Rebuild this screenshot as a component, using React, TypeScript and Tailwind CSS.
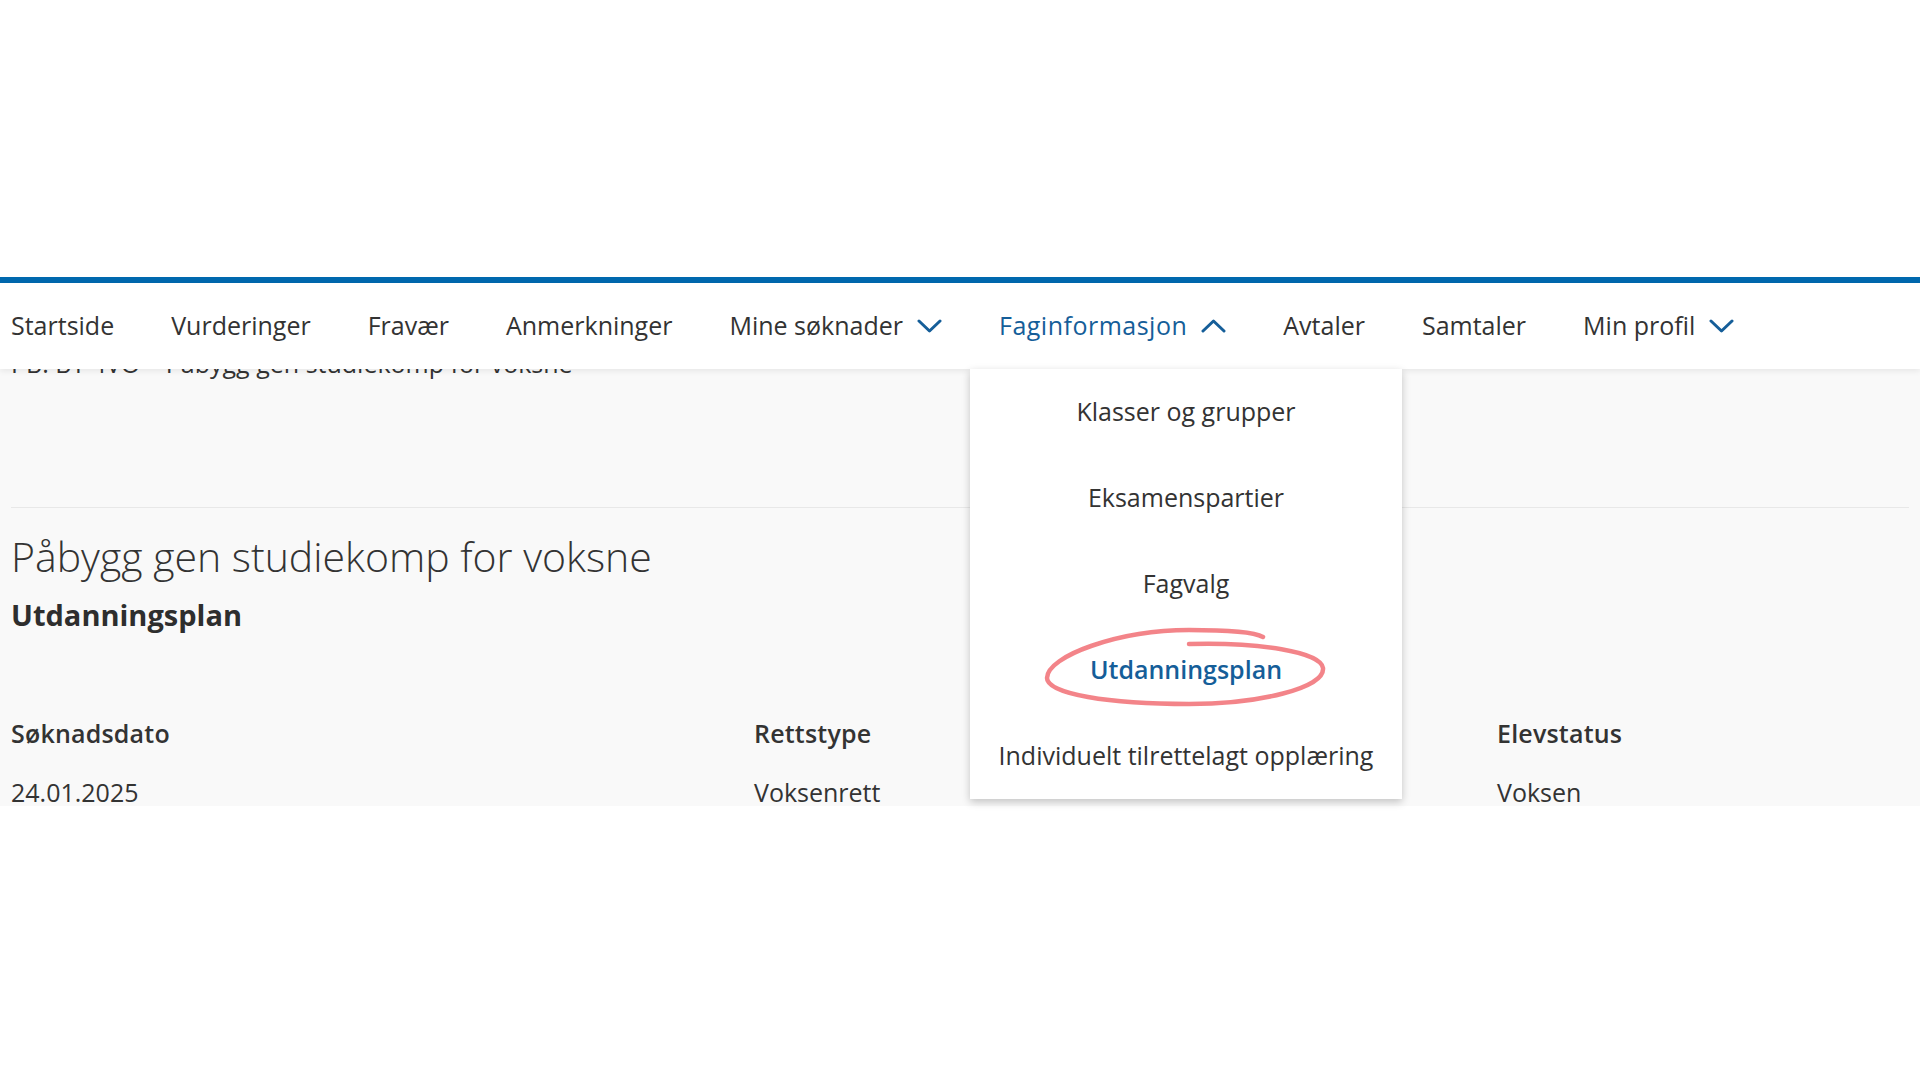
import React from "react";

const Chevron = ({ up = false }: { up?: boolean }) => (
  <svg width="25" height="14" viewBox="0 0 25 14" className="shrink-0">
    <polyline
      points={up ? "2,12 12.5,2 23,12" : "2,2 12.5,12 23,2"}
      fill="none"
      stroke="#155e99"
      strokeWidth="3"
      strokeLinecap="round"
      strokeLinejoin="round"
    />
  </svg>
);

const navItems: { label: string; chevron?: "down" | "up"; active?: boolean }[] = [
  { label: "Startside" },
  { label: "Vurderinger" },
  { label: "Fravær" },
  { label: "Anmerkninger" },
  { label: "Mine søknader", chevron: "down" },
  { label: "Faginformasjon", chevron: "up", active: true },
  { label: "Avtaler" },
  { label: "Samtaler" },
  { label: "Min profil", chevron: "down" },
];

const dropdownItems = [
  "Klasser og grupper",
  "Eksamenspartier",
  "Fagvalg",
  "Utdanningsplan",
  "Individuelt tilrettelagt opplæring",
];

export default function App() {
  return (
    <div
      className="w-[1920px] h-[1080px] bg-white overflow-hidden flex flex-col"
      style={{ fontFamily: '"Open Sans", "Noto Sans", sans-serif' }}
    >
      <div className="h-[277px] shrink-0" />
      <div className="relative z-20 shrink-0">
        <div className="h-[6px] bg-[#0068ae]" />
        <nav className="h-[86px] bg-white flex items-center pl-[11px] gap-[57px] shadow-[0_2px_6px_rgba(0,0,0,0.08)] text-[25px] text-[#333]">
          {navItems.map((it) => (
            <div key={it.label} className="relative flex items-center gap-[14px] h-full">
              <span className={it.active ? "text-[#155e99] tracking-[0.5px]" : ""}>{it.label}</span>
              {it.chevron && <Chevron up={it.chevron === "up"} />}
              {it.active && (
                <div className="absolute left-[-29px] top-[86px] w-[432px] bg-white shadow-[0_3px_8px_rgba(0,0,0,0.22)] flex flex-col tracking-normal">
                  {dropdownItems.map((d) => (
                    <div
                      key={d}
                      className={
                        "relative h-[86px] flex items-center justify-center whitespace-nowrap " +
                        (d === "Utdanningsplan" ? "text-[#155e99] font-semibold" : "text-[#333]")
                      }
                    >
                      {d}
                      {d === "Utdanningsplan" && (
                        <svg
                          className="absolute left-[59px] top-[-7px] pointer-events-none"
                          width="310"
                          height="100"
                          viewBox="0 0 310 100"
                        >
                          <path
                            d="M160 24 C 230 22, 292 32, 294 48 C 296 68, 230 84, 160 84 C 80 84, 18 74, 18 58 C 18 36, 90 10, 160 10 C 195 10, 225 12, 234 17"
                            fill="none"
                            stroke="#f27a7f"
                            strokeWidth="4.5"
                            strokeLinecap="round"
                            strokeOpacity="0.92"
                          />
                        </svg>
                      )}
                    </div>
                  ))}
                </div>
              )}
            </div>
          ))}
        </nav>
      </div>
      <main className="relative z-0 h-[437px] shrink-0 bg-[#f9f9f9] overflow-hidden px-[11px]">
        <div className="mt-[-23px] h-[34px] text-[25px] leading-[34px] text-[#333] whitespace-nowrap">
          PB. BT 4VO – Påbygg gen studiekomp for voksne
        </div>
        <div className="mt-[127px] border-t border-[#e8e8e8]" />
        <h1 className="mt-[24px] text-[41px] leading-[48px] font-light text-[#333] whitespace-nowrap">
          Påbygg gen studiekomp for voksne
        </h1>
        <h2 className="mt-[15px] text-[29px] leading-[40px] font-bold text-[#2e2e2e]">Utdanningsplan</h2>
        <div className="mt-[81px] grid grid-cols-[743px_743px_743px] text-[25px] text-[#333] whitespace-nowrap">
          <div>
            <div className="font-semibold leading-[35px] tracking-[0.2px]">Søknadsdato</div>
            <div className="mt-[24px] leading-[35px]">24.01.2025</div>
          </div>
          <div>
            <div className="font-semibold leading-[35px] tracking-[0.2px]">Rettstype</div>
            <div className="mt-[24px] leading-[35px]">Voksenrett</div>
          </div>
          <div>
            <div className="font-semibold leading-[35px] tracking-[0.2px]">Elevstatus</div>
            <div className="mt-[24px] leading-[35px]">Voksen</div>
          </div>
        </div>
      </main>
      <div className="flex-1 bg-white" />
    </div>
  );
}
